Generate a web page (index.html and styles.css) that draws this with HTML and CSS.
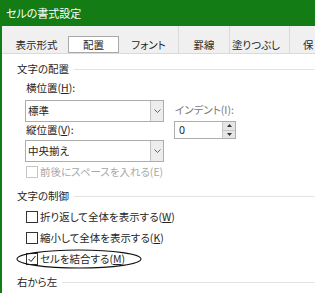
FILE: index.html
```html
<!DOCTYPE html>
<html lang="ja">

<head>
    <meta charset="UTF-8">
    <meta name="viewport" content="width=device-width, initial-scale=1.0">
    <title>セルの書式設定</title>
    <link rel="stylesheet" href="styles.css">
</head>

<body>
    <div class="titlebar">セルの書式設定</div>

    <div class="frame">
        <div class="tabs">
            <div class="tab tab-first">表示形式</div>
            <div class="tab tab-active">配置</div>
            <div class="tab tab-font">フォント</div>
            <div class="tab tab-border">罫線</div>
            <div class="tab tab-fill">塗りつぶし</div>
            <div class="tab tab-last">保</div>
        </div>

        <div class="panel">
            <div class="legend">文字の配置</div>

            <div class="align-grid">
                <div class="col-left">
                    <div class="field-label">横位置(<u>H</u>):</div>
                    <div class="select select-first">
                        <span class="select-value">標準</span>
                        <span class="select-btn">
                            <svg width="7" height="4" viewBox="0 0 7 4"><path d="M0.5 0.5 L3.5 3.5 L6.5 0.5" fill="none" stroke="#666" stroke-width="1"/></svg>
                        </span>
                    </div>
                    <div class="field-label">縦位置(<u>V</u>):</div>
                    <div class="select select-second">
                        <span class="select-value">中央揃え</span>
                        <span class="select-btn">
                            <svg width="7" height="4" viewBox="0 0 7 4"><path d="M0.5 0.5 L3.5 3.5 L6.5 0.5" fill="none" stroke="#666" stroke-width="1"/></svg>
                        </span>
                    </div>
                </div>

                <div class="col-right">
                    <div class="field-label field-disabled">インデント(I):</div>
                    <div class="spin">
                        <span class="spin-value">0</span>
                        <span class="spin-btns">
                            <span class="spin-half"><svg width="5" height="3" viewBox="0 0 5 3"><path d="M0 3 L2.5 0 L5 3 Z" fill="#333"/></svg></span>
                            <span class="spin-half"><svg width="5" height="3" viewBox="0 0 5 3"><path d="M0 0 L2.5 3 L5 0 Z" fill="#333"/></svg></span>
                        </span>
                    </div>
                </div>
            </div>

            <div class="check check-disabled check-space">
                <span class="box"></span>
                <span>前後にスペースを入れる(E)</span>
            </div>

            <div class="legend legend-control">文字の制御</div>

            <div class="check check-wrap">
                <span class="box"></span>
                <span>折り返して全体を表示する(<u>W</u>)</span>
            </div>
            <div class="check">
                <span class="box"></span>
                <span>縮小して全体を表示する(<u>K</u>)</span>
            </div>
            <div class="check check-merge">
                <span class="box">
                    <svg width="10" height="10" viewBox="0 0 10 10"><path d="M1.5 5 L4 7.5 L8.5 2" fill="none" stroke="#222" stroke-width="1"/></svg>
                </span>
                <span>セルを結合する(<u>M</u>)</span>
                <!-- hand drawn marker around the option -->
                <svg class="marker" width="126" height="20" viewBox="0 0 126 20">
                    <ellipse cx="63" cy="10" rx="62" ry="9" fill="none" stroke="#111" stroke-width="1.1"/>
                </svg>
            </div>

            <div class="legend legend-rtl">右から左</div>
        </div>
    </div>
</body>

</html>
```

FILE: styles.css
```css
body {
    margin: 0;
    width: 315px;
    height: 293px;
    overflow: hidden;
    background: #fff;
    color: #262626;
    font-family: "Noto Sans CJK JP", "Noto Sans", sans-serif;
    font-size: 10.5px;
    font-feature-settings: "palt";
}

u {
    text-underline-offset: 1px;
}

.titlebar {
    height: 26px;
    line-height: 27px;
    padding-left: 6px;
    background: #137c15;
    color: #fff;
    font-size: 11px;
}

.frame {
    border-left: 2px solid #137c15;
    height: 267px;
}

/* tab strip */
.tabs {
    display: flex;
    height: 27px;
    background: #f0f0f0;
    border-bottom: 1px solid #dadada;
}

.tab {
    box-sizing: border-box;
    height: 27px;
    padding-top: 10px;
    line-height: 17px;
    text-align: center;
}

.tab-first {
    width: 66px;
    padding-left: 3px;
}

.tab-active {
    align-self: flex-end;
    width: 51px;
    height: 17px;
    padding-top: 0;
    line-height: 15px;
    background: #fff;
    border: 1px solid #a9a9a9;
}

.tab-font {
    width: 60px;
    border-right: 1px solid #dadada;
}

.tab-border {
    width: 51px;
    border-right: 1px solid #dadada;
}

.tab-fill {
    width: 60px;
    padding-right: 7px;
    border-right: 1px solid #dadada;
}

.tab-last {
    flex: 1;
    text-align: left;
    padding-left: 13px;
}

/* page body */
.panel {
    padding: 8px 0 0 15px;
}

.legend {
    display: flex;
    align-items: center;
    height: 14px;
    line-height: 14px;
}

.legend::after {
    content: "";
    flex: 1;
    margin-left: 5px;
    border-top: 1px solid #e3e3e3;
}

.legend-control {
    margin-top: 10px;
}

.legend-rtl {
    margin-top: 9px;
}

.align-grid {
    display: flex;
    margin: 5px 0 0 8px;
}

.col-left {
    width: 139px;
}

.col-right {
    margin-left: 10px;
    padding-top: 22px;
}

.field-label {
    height: 14px;
    line-height: 14px;
    padding-left: 1px;
}

.field-disabled {
    color: #7a7a7a;
}

.select {
    box-sizing: border-box;
    display: flex;
    height: 22px;
    border: 1px solid #adadad;
    background: #fff;
}

.select-first {
    margin: 5px 0 1px;
}

.select-second {
    margin-top: 3px;
}

.select-value {
    flex: 1;
    padding-left: 2px;
    line-height: 20px;
}

.select-btn {
    display: flex;
    align-items: center;
    justify-content: center;
    width: 12px;
    background: #ededed;
    border-left: 1px solid #c4c4c4;
}

.spin {
    box-sizing: border-box;
    display: flex;
    width: 62px;
    height: 18px;
    margin-top: 4px;
    border: 1px solid #adadad;
}

.spin-value {
    flex: 1;
    padding-left: 4px;
    line-height: 16px;
    font-family: "Noto Sans", sans-serif;
}

.spin-btns {
    display: flex;
    flex-direction: column;
    width: 12px;
    border-left: 1px solid #c9c9c9;
}

.spin-half {
    flex: 1;
    display: flex;
    align-items: center;
    justify-content: center;
    background: #e6e6e6;
}

.spin-half + .spin-half {
    border-top: 1px solid #c9c9c9;
}

/* check boxes */
.check {
    position: relative;
    display: flex;
    align-items: center;
    height: 14px;
    line-height: 14px;
    margin-top: 7px;
}

.check-space {
    margin-top: 3px;
}

.box {
    box-sizing: border-box;
    display: flex;
    align-items: center;
    justify-content: center;
    width: 12px;
    height: 12px;
    margin: 0 2px 0 9px;
    border: 1px solid #333;
    background: #fff;
}

.check-disabled {
    color: #a8a8a8;
}

.check-disabled .box {
    border-color: #c6c6c6;
}

.marker {
    position: absolute;
    left: -1px;
    top: -3px;
}
```
